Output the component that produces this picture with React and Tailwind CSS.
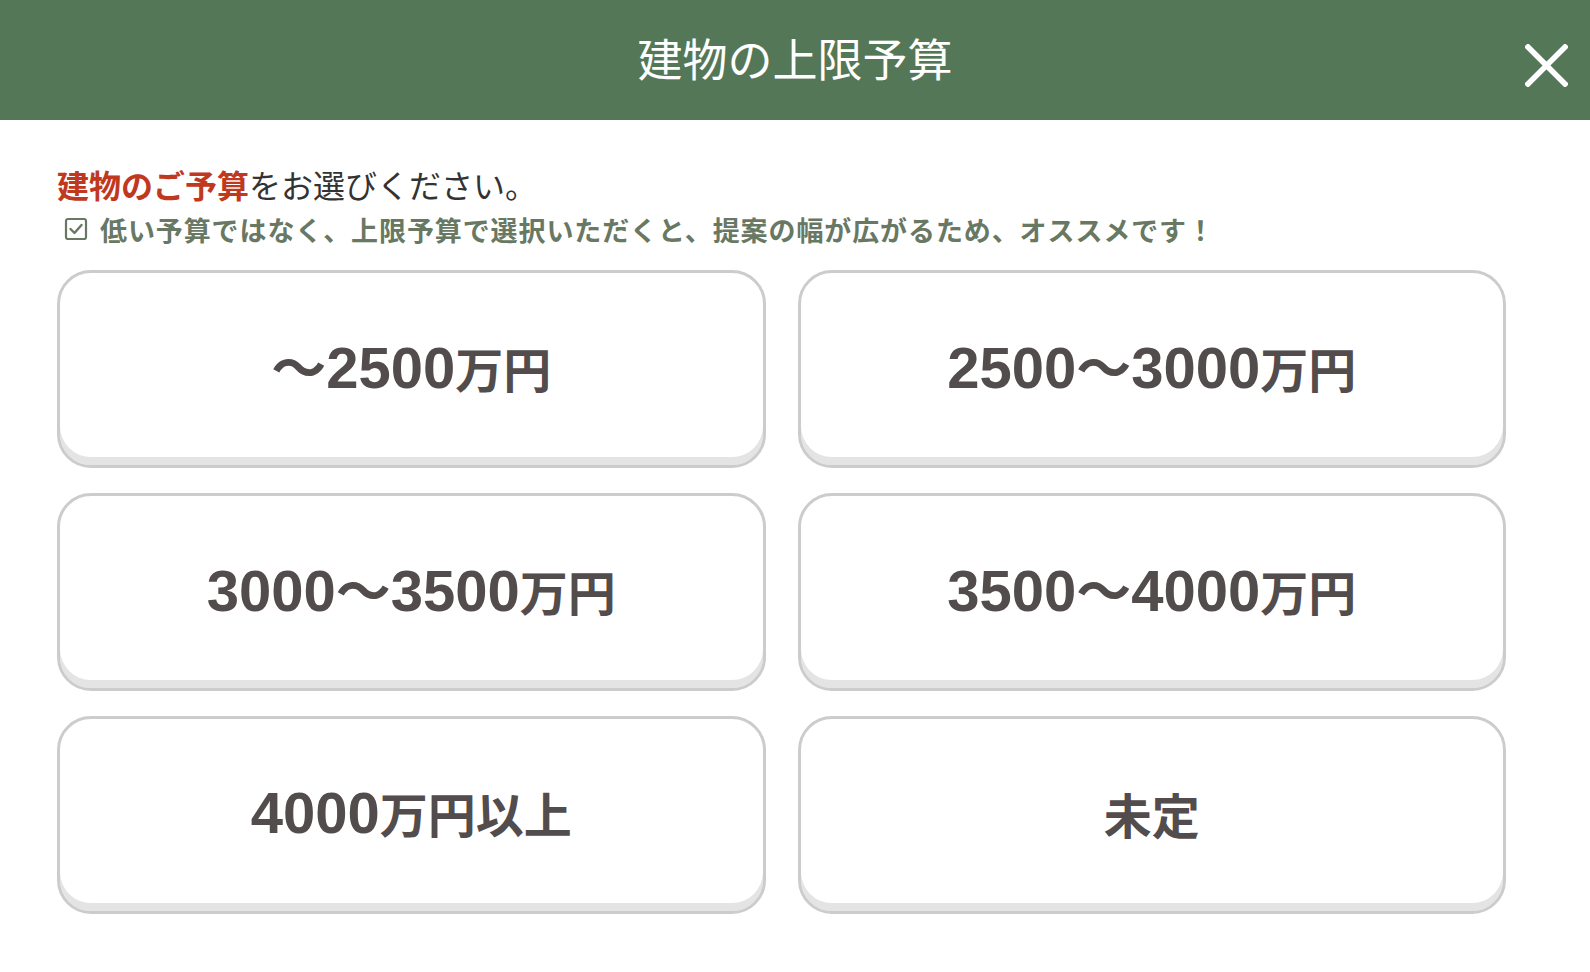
import React from "react";

const JP = { fontFamily: '"Noto Sans CJK JP", "Noto Sans", sans-serif' };

function Label({ text }) {
  const parts = text.split(/([0-9]+|〜)/).filter(Boolean);
  return (
    <span className="flex items-baseline justify-center text-[#524c4c] font-bold">
      {parts.map((p, i) => {
        if (/^[0-9]+$/.test(p)) {
          return (
            <span key={i} className="text-[58px] leading-none" style={{ fontFamily: '"Liberation Sans", Arial, sans-serif' }}>
              {p}
            </span>
          );
        }
        if (p === "〜") {
          return (
            <span key={i} className="text-[55px] leading-none" style={JP}>
              {p}
            </span>
          );
        }
        return (
          <span key={i} className="text-[48px] leading-none" style={JP}>
            {p}
          </span>
        );
      })}
    </span>
  );
}

const options = [
  "〜2500万円",
  "2500〜3000万円",
  "3000〜3500万円",
  "3500〜4000万円",
  "4000万円以上",
  "未定",
];

export default function App() {
  return (
    <div className="w-[1590px] h-[972px] bg-white overflow-hidden" style={JP}>
      <header className="relative h-[120px] bg-[#547857] flex items-center justify-center">
        <h1 className="text-white text-[45px] font-normal leading-none -mt-[6px]">建物の上限予算</h1>
        <button className="absolute right-[22px] top-[44px] w-[43px] h-[43px]" aria-label="close">
          <svg viewBox="0 0 43 43" width="43" height="43">
            <path d="M3 3 L40 40 M40 3 L3 40" stroke="#fff" strokeWidth="5.5" strokeLinecap="square" />
          </svg>
        </button>
      </header>

      <div className="ml-[57px] w-[1449px] pt-[44px]">
        <p className="text-[32px] leading-[40px] text-[#333333]">
          <span className="text-[#c0391f] font-bold">建物のご予算</span>をお選びください。
        </p>
        <div className="mt-[7px] flex items-center h-[36px] text-[#687863]">
          <svg viewBox="0 0 24 24" width="24" height="24" className="ml-[7px] mr-[12px]">
            <rect x="2" y="2" width="20" height="20" rx="2" fill="none" stroke="#687863" strokeWidth="2.2" />
            <path d="M6.5 12 L10.5 16 L17.5 8" fill="none" stroke="#687863" strokeWidth="2.4" strokeLinecap="round" strokeLinejoin="round" />
          </svg>
          <span className="text-[27px] font-bold leading-none tracking-[0.9px]">
            低い予算ではなく、上限予算で選択いただくと、提案の幅が広がるため、オススメです！
          </span>
        </div>

        <div className="mt-[23px] grid grid-cols-2 gap-x-[32px] gap-y-[25px]">
          {options.map((o) => (
            <button
              key={o}
              className="h-[198px] rounded-[34px] border-[3px] border-[#cccccc] bg-white shadow-[inset_0_-8px_0_#e4e4e4] flex items-center justify-center pb-[4px]"
            >
              <Label text={o} />
            </button>
          ))}
        </div>
      </div>
    </div>
  );
}
